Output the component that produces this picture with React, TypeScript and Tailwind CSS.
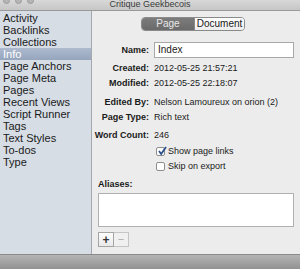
import React from 'react';

const sidebarItems = [
  'Activity',
  'Backlinks',
  'Collections',
  'Info',
  'Page Anchors',
  'Page Meta',
  'Pages',
  'Recent Views',
  'Script Runner',
  'Tags',
  'Text Styles',
  'To-dos',
  'Type',
];

function Row({ label, children, className = '' }: { label: string; children: React.ReactNode; className?: string }) {
  return (
    <div className={`flex items-center ${className}`}>
      <span className="w-[51px] text-right font-bold shrink-0 whitespace-nowrap flex justify-end">{label}</span>
      <span className="ml-[5px] whitespace-nowrap">{children}</span>
    </div>
  );
}

export default function App() {
  return (
    <div
      className="w-[300px] h-[269px] flex flex-col overflow-hidden bg-[#ececec] text-[#1a1a1a] text-[9px] leading-none"
      style={{ fontFamily: '"Liberation Sans", Arial, sans-serif' }}
    >
      {/* title bar */}
      <div className="h-[11px] shrink-0 relative flex items-end justify-center bg-gradient-to-b from-[#d8d8d8] to-[#c6c6c6] border-b border-[#9a9a9a]">
        <div className="absolute left-[3px] top-[-3px] flex gap-[5px]">
          <span className="w-[7px] h-[7px] rounded-full bg-[#b5b5b5] border border-[#9c9c9c]" />
          <span className="w-[7px] h-[7px] rounded-full bg-[#b5b5b5] border border-[#9c9c9c]" />
          <span className="w-[7px] h-[7px] rounded-full bg-[#b5b5b5] border border-[#9c9c9c]" />
        </div>
        <span className="text-[9px] text-[#3a3a3a] mb-[1px] leading-none">Critique Geekbecois</span>
      </div>

      <div className="flex flex-1 min-h-0">
        {/* sidebar */}
        <div className="w-[92px] shrink-0 bg-[#d6dde5] border-r border-[#a5a9ae] pt-[1px] text-[11px]">
          {sidebarItems.map((item) => (
            <div
              key={item}
              className={`h-[12px] flex items-center pl-[3px] whitespace-nowrap ${
                item === 'Info' ? 'bg-gradient-to-b from-[#adbace] to-[#95a5bc] text-white' : ''
              }`}
            >
              {item}
            </div>
          ))}
        </div>

        {/* info pane */}
        <div className="flex-1 flex flex-col pl-[6px] pr-[6px]">
          <div className="flex pt-[6px] ml-[43px]">
            <div className="flex h-[14px] rounded-[4px] border border-[#8a8a8a] overflow-hidden text-[10px]">
              <div className="w-[52px] flex items-center justify-center bg-gradient-to-b from-[#7c7c7c] to-[#6a6a6a] text-[#e8e8e8]">
                Page
              </div>
              <div className="w-[50px] flex items-center justify-center bg-gradient-to-b from-white to-[#ededed] border-l border-[#8a8a8a]">
                Document
              </div>
            </div>
          </div>

          <div className="flex items-center mt-[11px]">
            <span className="w-[51px] text-right font-bold shrink-0">Name:</span>
            <div className="ml-[5px] flex-1 h-[16px] bg-white border border-[#a8a8a8] flex items-center pl-[3px] text-[10px]">
              Index
            </div>
          </div>

          <Row label="Created:" className="mt-[4px] h-[12px]">2012-05-25 21:57:21</Row>
          <Row label="Modified:" className="mt-[3px] h-[12px]">2012-05-25 22:18:07</Row>
          <Row label="Edited By:" className="mt-[7px] h-[12px]">Nelson Lamoureux on orion (2)</Row>
          <Row label="Page Type:" className="mt-[3px] h-[12px]">Rich text</Row>
          <Row label="Word Count:" className="mt-[6px] h-[12px]">246</Row>

          <div className="flex items-center mt-[4px] h-[12px] ml-[58px]">
            <span className="w-[9px] h-[9px] rounded-[2px] border border-[#8e8e8e] bg-white relative">
              <svg viewBox="0 0 10 10" className="absolute left-[0px] top-[-2px] w-[10px] h-[10px]">
                <path d="M2 5 L4.2 8 L9 1" fill="none" stroke="#2a4f8a" strokeWidth="1.8" />
              </svg>
            </span>
            <span className="ml-[3px]">Show page links</span>
          </div>
          <div className="flex items-center mt-[3px] h-[12px] ml-[58px]">
            <span className="w-[9px] h-[9px] rounded-[2px] border border-[#8e8e8e] bg-white" />
            <span className="ml-[3px]">Skip on export</span>
          </div>

          <div className="mt-[8px] font-bold">Aliases:</div>
          <div className="mt-[4px] h-[34px] bg-white border border-[#b0b0b0]" />

          <div className="flex mt-[5px]">
            <div className="w-[16px] h-[15px] flex items-center justify-center border border-[#a5a5a5] bg-gradient-to-b from-white to-[#e8e8e8] text-[12px] font-bold text-[#333]">
              +
            </div>
            <div className="w-[15px] h-[15px] flex items-center justify-center border border-l-0 border-[#c5c5c5] bg-[#f0f0f0] text-[11px] text-[#aaa]">
              −
            </div>
          </div>
        </div>
      </div>

      {/* bottom bar */}
      <div className="h-[15px] shrink-0 bg-gradient-to-b from-[#b4b4b4] to-[#929292] border-t border-[#8a8a8a]" />
    </div>
  );
}
